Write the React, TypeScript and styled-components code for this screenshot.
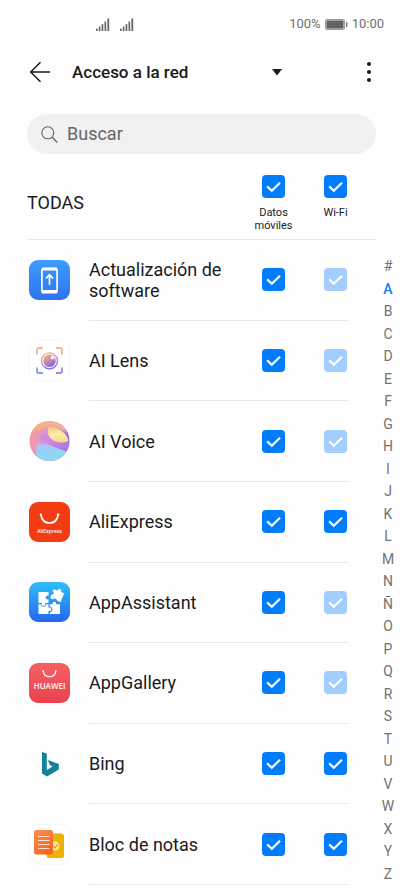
import React, { useState } from "react";
import styled, { createGlobalStyle } from "styled-components";

const GlobalStyle = createGlobalStyle`
  *, *::before, *::after { box-sizing: border-box; }
  body {
    margin: 0;
    background: #fefefe;
    color: #1a1a1a;
    font-family: Roboto, "Liberation Sans", sans-serif;
  }
  button, input, select { font: inherit; color: inherit; }
  svg { display: block; }
`;

const Page = styled.div`
  min-height: 100vh;
  display: flex;
  flex-direction: column;
`;

const StatusBar = styled.div`
  height: 48px;
  padding: 0 19px 0 96px;
  display: flex;
  align-items: center;
  justify-content: space-between;
  font-size: 13px;
  line-height: 16px;
  color: #707070;
`;

const StatusGroup = styled.div<{ $gap: number }>`
  display: flex;
  align-items: center;
  gap: ${(p) => p.$gap}px;
`;

const TitleBar = styled.header`
  height: 48px;
  padding: 0 18px 0 24px;
  display: flex;
  align-items: center;
`;

const IconButton = styled.button`
  width: 32px;
  height: 32px;
  padding: 0;
  border: 0;
  background: none;
  display: grid;
  place-items: center;
  cursor: pointer;
`;

const Picker = styled.div`
  width: 211px;
  margin: 0 auto 0 16px;
  display: grid;
  align-items: center;

  > * { grid-area: 1 / 1; }
  > svg { justify-self: end; pointer-events: none; }
`;

const PickerSelect = styled.select`
  appearance: none;
  width: 100%;
  height: 32px;
  padding: 0;
  border: 0;
  background: none;
  font-size: 17px;
  font-weight: 500;
`;

const SearchBox = styled.label`
  height: 40px;
  margin: 18px 27px 0;
  padding: 0 14px;
  display: flex;
  align-items: center;
  gap: 9px;
  border-radius: 20px;
  background: #f1f1f1;
  color: #666;
`;

const SearchInput = styled.input`
  flex: 1;
  min-width: 0;
  padding: 0;
  border: 0;
  outline: 0;
  background: none;
  font-size: 18px;
  line-height: 24px;

  &::placeholder { color: #666; opacity: 1; }
`;

const AllRow = styled.div`
  height: 86px;
  margin: 0 27px;
  padding: 21px 10px 0 0;
  display: flex;
  gap: 1px;
  border-bottom: 1px solid #e8e8e8;
`;

const AllTitle = styled.h2`
  flex: 1;
  margin: 16px 0 0;
  font-size: 18px;
  line-height: 24px;
  font-weight: 400;
`;

const ColumnLabel = styled.label`
  width: 61px;
  display: flex;
  flex-direction: column;
  align-items: center;
  gap: 8px;
  font-size: 11px;
  line-height: 13px;
  text-align: center;
`;

const Body = styled.main`
  flex: 1;
  padding: 0 0 11px 27px;
  display: flex;
  gap: 24px;
`;

const AppList = styled.ul`
  flex: 1;
  margin: 0;
  padding: 0;
  list-style: none;
  display: grid;
  grid-auto-rows: 1fr;
`;

const AppRow = styled.li`
  min-height: 64px;
  padding-left: 2px;
  display: flex;
  align-items: stretch;
  gap: 19px;

  > svg { align-self: center; flex: none; }
`;

const RowContent = styled.div`
  flex: 1;
  padding-right: 2px;
  display: flex;
  align-items: center;
  gap: 39px;
  border-bottom: 1px solid #e8e8e8;
`;

const AppName = styled.span`
  flex: 1;
  font-size: 18px;
  line-height: 21px;
`;

const CheckFrame = styled.span`
  flex: none;
  width: 23px;
  height: 23px;
  display: grid;

  > * { grid-area: 1 / 1; }
  > svg { pointer-events: none; }
`;

const CheckInput = styled.input`
  appearance: none;
  width: 23px;
  height: 23px;
  margin: 0;
  border: 2px solid #999;
  border-radius: 4px;

  &:checked { border: 0; background: #007dff; }
  &:checked:disabled { background: #a1cdff; }
  &:not(:checked) + svg { visibility: hidden; }
`;

const IndexNav = styled.nav`
  width: 30px;
  padding-top: 15px;
  display: grid;
  grid-auto-rows: 1fr;
`;

const IndexLink = styled.a<{ $active: boolean }>`
  display: grid;
  place-items: center;
  font-size: 14px;
  line-height: 16px;
  font-weight: ${(p) => (p.$active ? 500 : 400)};
  color: ${(p) => (p.$active ? "#0a83f0" : "#727272")};
  text-decoration: none;
`;

interface CheckProps {
  label?: string;
  disabled?: boolean;
}

function Check({ label, disabled }: CheckProps) {
  const [checked, setChecked] = useState(true);
  return (
    <CheckFrame>
      <CheckInput
        type="checkbox"
        aria-label={label}
        disabled={disabled}
        checked={checked}
        onChange={(e) => setChecked(e.target.checked)}
      />
      <svg width="23" height="23" viewBox="0 0 23 23" fill="none" stroke="#fff" strokeWidth="2.200">
        <path d="M5.200 11.400 9.800 15.800 18 7.700" />
      </svg>
    </CheckFrame>
  );
}

function Signal() {
  return (
    <svg width="14" height="13" viewBox="0 0 14 13" fill="#666">
      <path d="M0 10.500h1.600V13H0zM2.800 8.500h1.600V13H2.800zM5.600 6.200h1.700V13H5.600zM8.500 3.400h1.700V13H8.500zM11.400 0.500h1.800V13h-1.800z" />
    </svg>
  );
}

function Battery() {
  return (
    <svg width="23" height="11" viewBox="0 0 23 11" fill="none">
      <rect x=".5" y=".5" width="19" height="10" rx="1" stroke="#999" />
      <rect x="1.400" y="1.400" width="17.200" height="8.200" fill="#626262" />
      <path d="M21 3h1.400v5H21z" fill="#777" />
    </svg>
  );
}

function UpdateIcon() {
  return (
    <svg width="41" height="41" viewBox="0 0 41 41" fill="none">
      <defs>
        <linearGradient id="update" x1="0" y1="0" x2="0" y2="1">
          <stop stopColor="#3f9cfd" />
          <stop offset="1" stopColor="#2f73ef" />
        </linearGradient>
      </defs>
      <rect width="41" height="40" rx="9" fill="url(#update)" />
      <rect x="12.900" y="8.300" width="15.200" height="24.400" rx="2" stroke="#fff" strokeWidth="1.700" />
      <path d="M13 9.100h15M13 31.300h15" stroke="#fff" strokeWidth="2.600" />
      <path d="M20.500 24.700v-9M16.900 18.500l3.600-3.700 3.600 3.700" stroke="#fff" strokeWidth="1.700" />
    </svg>
  );
}

function LensIcon() {
  return (
    <svg width="41" height="41" viewBox="0 0 41 41" fill="none">
      <defs>
        <linearGradient id="lensFrame" gradientUnits="userSpaceOnUse" x1="12" y1="7" x2="22" y2="34">
          <stop stopColor="#efb9a0" />
          <stop offset=".4" stopColor="#f0bb91" />
          <stop offset=".65" stopColor="#7ba9ea" />
          <stop offset="1" stopColor="#9c8be0" />
        </linearGradient>
        <linearGradient id="lensEye" x1="0" y1="0" x2=".5" y2="1">
          <stop stopColor="#f3bc55" />
          <stop offset=".5" stopColor="#cc91b0" />
          <stop offset="1" stopColor="#8868e8" />
        </linearGradient>
      </defs>
      <rect x=".5" y=".5" width="40" height="40" rx="9" fill="#fff" stroke="#f6f6f6" />
      <path
        d="M8 14.500V10q0-2 2-2h4M27 8h4q2 0 2 2v4.500M33 27.500V31q0 2-2 2h-4M14 33h-4q-2 0-2-2v-3.500"
        stroke="url(#lensFrame)"
        strokeWidth="1.900"
      />
      <circle cx="20.500" cy="20.800" r="8" stroke="url(#lensEye)" strokeWidth="1.300" />
      <circle cx="20.500" cy="20.800" r="6.300" fill="url(#lensEye)" />
      <circle cx="23.600" cy="17.600" r="1.900" fill="#fff4ee" />
    </svg>
  );
}

function VoiceIcon() {
  return (
    <svg width="41" height="41" viewBox="0 0 41 41">
      <defs>
        <linearGradient id="voiceBase" x1="0" y1=".3" x2="1" y2=".6">
          <stop stopColor="#f29a98" />
          <stop offset=".45" stopColor="#dc99d8" />
          <stop offset="1" stopColor="#8458e8" />
        </linearGradient>
        <linearGradient id="voiceTop" x1="0" y1="0" x2="1" y2=".4">
          <stop stopColor="#f5a08c" />
          <stop offset=".5" stopColor="#f7b584" />
          <stop offset="1" stopColor="#eeb0a0" />
        </linearGradient>
        <linearGradient id="voiceBlue" x1=".3" y1="0" x2=".5" y2="1">
          <stop stopColor="#b4c2f6" />
          <stop offset=".6" stopColor="#86dcf6" />
          <stop offset="1" stopColor="#b0c0ee" />
        </linearGradient>
        <linearGradient id="voiceYellow" x1="0" y1="0" x2=".2" y2="1">
          <stop stopColor="#f8bd78" />
          <stop offset=".5" stopColor="#fff0a4" />
          <stop offset="1" stopColor="#f7d58a" />
        </linearGradient>
        <clipPath id="voiceClip">
          <circle cx="20.500" cy="20" r="20" />
        </clipPath>
        <filter id="voiceSoft" x="-20%" y="-20%" width="140%" height="140%">
          <feGaussianBlur stdDeviation="1" />
        </filter>
      </defs>
      <g clipPath="url(#voiceClip)">
        <path d="M0 0h41v41H0z" fill="url(#voiceBase)" />
        <g filter="url(#voiceSoft)">
          <path d="M-2 16C4 10 12 8 21 5l16 6 6-14H-2z" fill="url(#voiceTop)" />
          <path d="M10 14c6-3 10-2 12 3 5 5 13 5 18 3v10c-10-1-18-9-26-8z" fill="#c77fe9" opacity=".65" />
        </g>
        <path d="M8 23.500C18 20 27 28 41 31L32 43H14C8 39 6 31 8 23.500z" fill="url(#voiceBlue)" />
        <path d="M19 6C27 5 39 12 39.500 20c-7 4-20 1-20.500-9z" fill="url(#voiceYellow)" />
      </g>
    </svg>
  );
}

const TileText = styled.text`
  font-family: "Open Sans", Roboto, sans-serif;
  text-anchor: middle;
  fill: #fff;
`;

function AliExpressIcon() {
  return (
    <svg width="41" height="41" viewBox="0 0 41 41" fill="none">
      <rect width="41" height="40" rx="9" fill="#f33c12" />
      <path d="M11.900 13c1 5.400 4.300 8 8.600 8s7.700-2.600 8.600-8" stroke="#fff" strokeWidth="1.700" />
      <circle cx="11.900" cy="12.600" r="1.200" fill="#fff" />
      <circle cx="29.100" cy="12.600" r="1.200" fill="#fff" />
      <TileText x="20.500" y="31" fontSize="5" fontWeight="600">AliExpress</TileText>
    </svg>
  );
}

function AssistantIcon() {
  return (
    <svg width="41" height="41" viewBox="0 0 41 41">
      <defs>
        <linearGradient id="assistant" x1="0" y1="0" x2="0" y2="1">
          <stop stopColor="#2fbff8" />
          <stop offset="1" stopColor="#2467ef" />
        </linearGradient>
      </defs>
      <rect width="41" height="40" rx="9" fill="url(#assistant)" />
      <g fill="#fff">
        <path d="M9.500 10h10v3.700c-3-1-4.400 4.300 0 3.700V21h-3.300c1 3.800-4.500 3.800-3.400 0H9.500z" />
        <path d="M9.500 22.300h2.200c.8 3.300 5 3.300 5.600 0h2.200v3.400c3.700-1.200 3.700 4.500 0 3.400V32h-10z" />
        <path d="M20.800 22.300h2.700c-.5-3.500 4.300-3.500 3.700 0H31V32H20.800v-1.600c3.400-.8 3.400-5.300 0-6z" />
        <path d="m24.500 7.200 4 1.400c1.300-3 4.900-1.300 3.600 1.400l3 1.200-3.500 9-3.500-1.400c-.6-3.200-4-2.700-3.900-1.400l-3-1.200 1.100-3.200c3-.2 3.200-3.200 1.200-3.500z" />
      </g>
    </svg>
  );
}

function GalleryIcon() {
  return (
    <svg width="41" height="41" viewBox="0 0 41 41" fill="none">
      <defs>
        <linearGradient id="gallery" x1="0" y1="0" x2="0" y2="1">
          <stop stopColor="#f75f62" />
          <stop offset="1" stopColor="#ea414e" />
        </linearGradient>
      </defs>
      <rect width="41" height="40" rx="9" fill="url(#gallery)" />
      <path d="M14.200 8.100c.4 3.600 3 5.500 6.300 5.500s5.900-1.900 6.300-5.500" stroke="#fff" strokeWidth="1.200" />
      <circle cx="14.200" cy="7.900" r=".9" fill="#fff" />
      <circle cx="26.800" cy="7.900" r=".9" fill="#fff" />
      <TileText x="20.500" y="26" fontSize="8" fontWeight="600">HUAWEI</TileText>
    </svg>
  );
}

function BingIcon() {
  return (
    <svg width="41" height="41" viewBox="0 0 41 41">
      <path d="m13 8 4.800 1.600v16.500l5.800-3.700-2.800-1.500-2-4.900 11 3.900v5.700L18 32.500l-5-3.100z" fill="#14829a" />
    </svg>
  );
}

function NotesIcon() {
  return (
    <svg width="41" height="41" viewBox="0 0 41 41" fill="none">
      <defs>
        <linearGradient id="notes" x1="0" y1="0" x2=".6" y2="1">
          <stop stopColor="#ff9048" />
          <stop offset="1" stopColor="#f46624" />
        </linearGradient>
      </defs>
      <rect x=".5" y=".5" width="40" height="40" rx="9" fill="#fff" stroke="#f6f6f6" />
      <rect x="17.500" y="9.500" width="17.500" height="24.500" rx="2.500" fill="#ecb306" />
      <circle cx="26" cy="22" r="4.500" fill="#ffe59a" />
      <rect x="5" y="6" width="19" height="24.500" rx="2.500" fill="url(#notes)" />
      <path d="M9 12.500h11.500M9 16.500h11.500M9 20.500h11.500M9 24.500h11.500" stroke="#ffe3d0" strokeWidth="1.200" />
      <path d="m24.200 22.200 1.700 1.700 3.200-3.800" stroke="#e3a300" strokeWidth="1.200" />
    </svg>
  );
}

interface AppEntry {
  name: string;
  Icon: () => React.JSX.Element;
  wifiLocked: boolean;
}

const apps: AppEntry[] = [
  { name: "Actualización de software", Icon: UpdateIcon, wifiLocked: true },
  { name: "AI Lens", Icon: LensIcon, wifiLocked: true },
  { name: "AI Voice", Icon: VoiceIcon, wifiLocked: true },
  { name: "AliExpress", Icon: AliExpressIcon, wifiLocked: false },
  { name: "AppAssistant", Icon: AssistantIcon, wifiLocked: true },
  { name: "AppGallery", Icon: GalleryIcon, wifiLocked: true },
  { name: "Bing", Icon: BingIcon, wifiLocked: false },
  { name: "Bloc de notas", Icon: NotesIcon, wifiLocked: false },
];

const letters = [..."#ABCDEFGHIJKLMNÑOPQRSTUVWXYZ"];

export default function App() {
  return (
    <Page>
      <GlobalStyle />
      <StatusBar>
        <StatusGroup $gap={10}>
          <Signal />
          <Signal />
        </StatusGroup>
        <StatusGroup $gap={4}>
          <span>100%</span>
          <Battery />
          <span>10:00</span>
        </StatusGroup>
      </StatusBar>

      <TitleBar>
        <IconButton type="button" aria-label="Atrás">
          <svg width="22" height="22" viewBox="0 0 22 22" fill="none" stroke="#1a1a1a" strokeWidth="1.500">
            <path d="M21 11H1.500M11.500 1.200 1.700 11l9.800 9.800" />
          </svg>
        </IconButton>
        <Picker>
          <PickerSelect aria-label="Sección" defaultValue="red">
            <option value="red">Acceso a la red</option>
          </PickerSelect>
          <svg width="12" height="8" viewBox="0 0 12 8" fill="#1a1a1a">
            <path d="M1 1h10L6 7.500z" />
          </svg>
        </Picker>
        <IconButton type="button" aria-label="Más opciones">
          <svg width="6" height="22" viewBox="0 0 6 22" fill="#1a1a1a">
            <circle cx="3" cy="3" r="2" />
            <circle cx="3" cy="11" r="2" />
            <circle cx="3" cy="19" r="2" />
          </svg>
        </IconButton>
      </TitleBar>

      <SearchBox>
        <svg width="17" height="17" viewBox="0 0 17 17" fill="none" stroke="#666" strokeWidth="1.100">
          <circle cx="6.800" cy="6.800" r="6" />
          <path d="m11.200 11.200 5.200 5.200" strokeWidth="1.400" />
        </svg>
        <SearchInput type="text" placeholder="Buscar" aria-label="Buscar" />
      </SearchBox>

      <AllRow>
        <AllTitle>TODAS</AllTitle>
        <ColumnLabel>
          <Check />
          Datos móviles
        </ColumnLabel>
        <ColumnLabel>
          <Check />
          Wi-Fi
        </ColumnLabel>
      </AllRow>

      <Body>
        <AppList>
          {apps.map(({ name, Icon, wifiLocked }) => (
            <AppRow key={name}>
              <Icon />
              <RowContent>
                <AppName>{name}</AppName>
                <Check label={`${name}: datos móviles`} />
                <Check label={`${name}: Wi-Fi`} disabled={wifiLocked} />
              </RowContent>
            </AppRow>
          ))}
        </AppList>
        <IndexNav aria-label="Índice alfabético">
          {letters.map((letter) => (
            <IndexLink key={letter} href={`#${letter}`} $active={letter === "A"}>
              {letter}
            </IndexLink>
          ))}
        </IndexNav>
      </Body>
    </Page>
  );
}
